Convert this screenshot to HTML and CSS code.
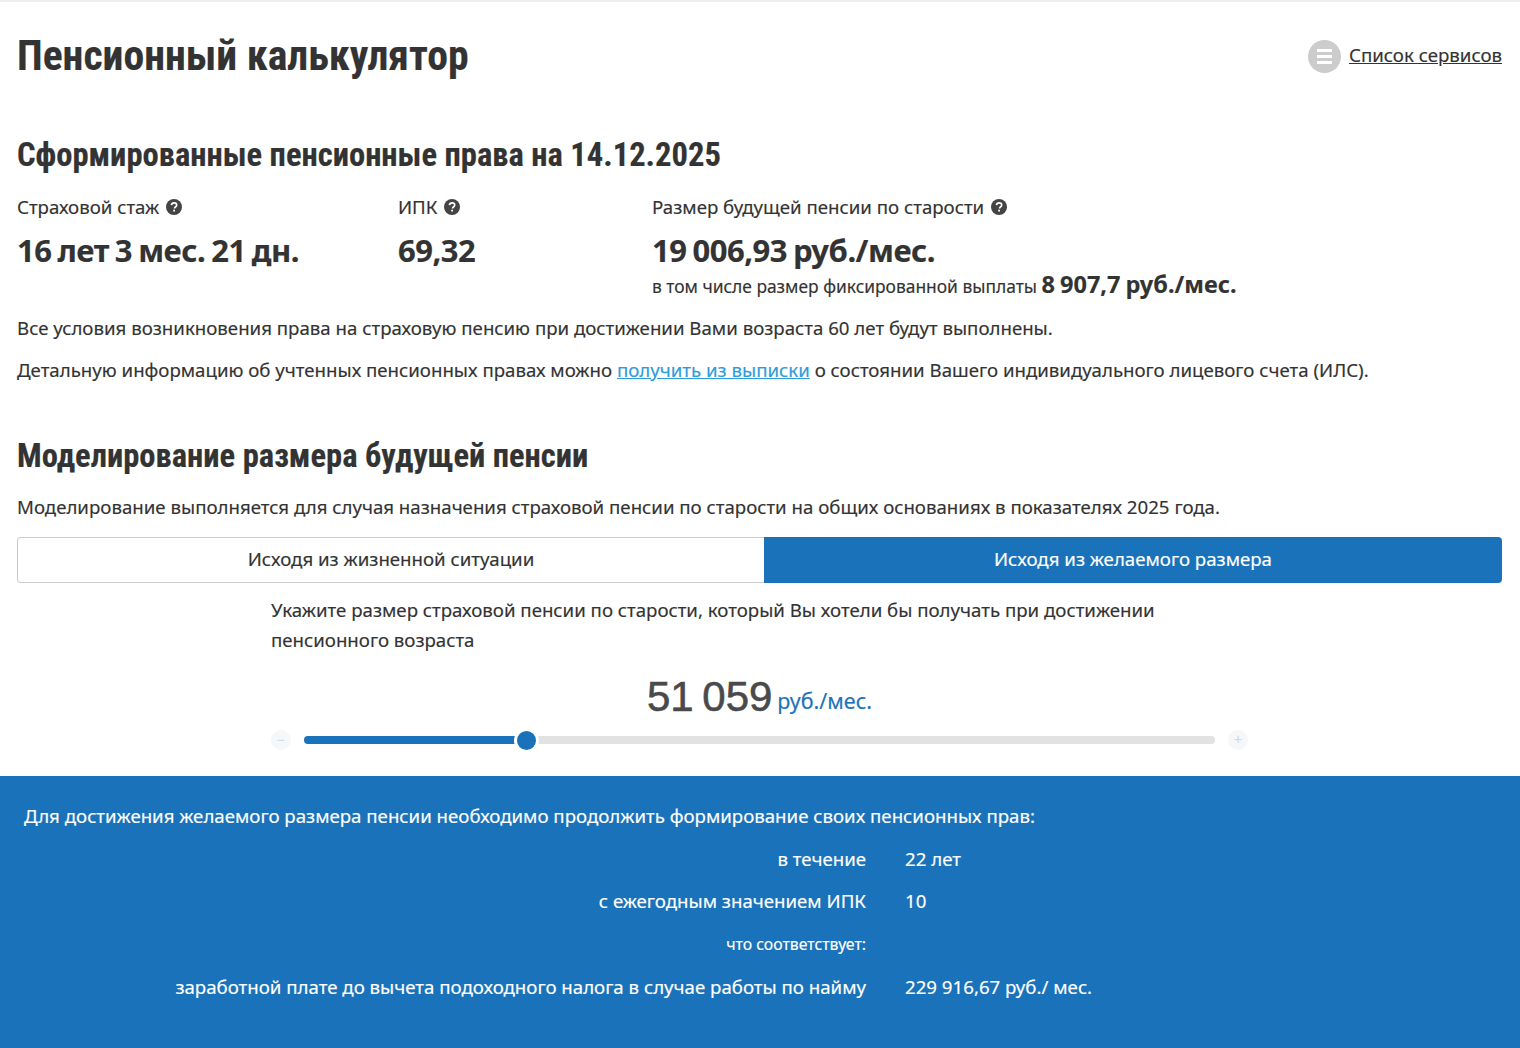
FILE: index.html
```html
<!DOCTYPE html>
<html lang="ru">

<head>
    <meta charset="UTF-8">
    <title>Пенсионный калькулятор</title>
    <link rel="stylesheet" href="styles.css">
</head>

<body>
    <div class="page">
        <header class="page-header">
            <h1>Пенсионный калькулятор</h1>
            <a class="services-link" href="#">
                <span class="services-icon"><i></i><i></i><i></i></span>
                <span class="services-text">Список сервисов</span>
            </a>
        </header>

        <h2 class="rights-title">Сформированные пенсионные права на 14.12.2025</h2>

        <div class="stats">
            <div class="stat">
                <div class="stat-label">Страховой стаж
                    <svg class="help" viewBox="0 0 16 16"><circle cx="8" cy="8" r="8"/><path d="M5.4 6.1c.2-1.500 1.300-2.300 2.700-2.300 1.500 0 2.600.9 2.600 2.200 0 1-.6 1.500-1.300 2-.5.4-.8.6-.8 1.200v.3" fill="none" stroke="#fff" stroke-width="1.700"/><rect x="7.200" y="10.700" width="1.800" height="1.800" fill="#fff"/></svg>
                </div>
                <div class="stat-value">16 лет 3 мес. 21 дн.</div>
            </div>
            <div class="stat">
                <div class="stat-label">ИПК
                    <svg class="help" viewBox="0 0 16 16"><circle cx="8" cy="8" r="8"/><path d="M5.4 6.1c.2-1.500 1.300-2.300 2.700-2.300 1.500 0 2.600.9 2.600 2.200 0 1-.6 1.500-1.300 2-.5.4-.8.6-.8 1.200v.3" fill="none" stroke="#fff" stroke-width="1.700"/><rect x="7.200" y="10.700" width="1.800" height="1.800" fill="#fff"/></svg>
                </div>
                <div class="stat-value">69,32</div>
            </div>
            <div class="stat">
                <div class="stat-label">Размер будущей пенсии по старости
                    <svg class="help" viewBox="0 0 16 16"><circle cx="8" cy="8" r="8"/><path d="M5.4 6.1c.2-1.500 1.300-2.300 2.700-2.300 1.500 0 2.600.9 2.600 2.200 0 1-.6 1.500-1.300 2-.5.4-.8.6-.8 1.200v.3" fill="none" stroke="#fff" stroke-width="1.700"/><rect x="7.200" y="10.700" width="1.800" height="1.800" fill="#fff"/></svg>
                </div>
                <div class="stat-value">19 006,93 руб./мес.</div>
                <div class="stat-note">в том числе размер фиксированной выплаты <b>8 907,7 руб./мес.</b></div>
            </div>
        </div>

        <p class="text text-first">Все условия возникновения права на страховую пенсию при достижении Вами возраста 60 лет будут выполнены.</p>
        <p class="text">Детальную информацию об учтенных пенсионных правах можно <a href="#">получить из выписки</a> о состоянии Вашего индивидуального лицевого счета (ИЛС).</p>

        <h2 class="model-title">Моделирование размера будущей пенсии</h2>
        <p class="text model-text">Моделирование выполняется для случая назначения страховой пенсии по старости на общих основаниях в показателях 2025 года.</p>

        <div class="tabs">
            <div class="tab">Исходя из жизненной ситуации</div>
            <div class="tab active">Исходя из желаемого размера</div>
        </div>

        <div class="model">
            <p class="model-hint">Укажите размер страховой пенсии по старости, который Вы хотели бы получать при достижении пенсионного возраста</p>
            <div class="amount"><span class="amount-num">51 059</span> <span class="amount-unit">руб./мес.</span></div>
            <div class="slider">
                <span class="slider-btn">&minus;</span>
                <div class="slider-track">
                    <div class="slider-fill" style="width: 24.4%"></div>
                    <div class="slider-thumb"></div>
                </div>
                <span class="slider-btn">+</span>
            </div>
        </div>
    </div>

    <section class="result">
        <p class="result-lead">Для достижения желаемого размера пенсии необходимо продолжить формирование своих пенсионных прав:</p>
        <div class="result-row">
            <div class="result-key">в течение</div>
            <div>22 лет</div>
        </div>
        <div class="result-row">
            <div class="result-key">с ежегодным значением ИПК</div>
            <div>10</div>
        </div>
        <div class="result-row result-small">
            <div class="result-key">что соответствует:</div>
            <div></div>
        </div>
        <div class="result-row">
            <div class="result-key">заработной плате до вычета подоходного налога в случае работы по найму</div>
            <div>229 916,67 руб./ мес.</div>
        </div>
    </section>
</body>

</html>
```

FILE: styles.css
```css
* {
    box-sizing: border-box;
}

body {
    margin: 0;
    height: 1048px;
    overflow: hidden;
    background: #fff;
    color: #333;
    font-family: "Noto Sans", "Open Sans", sans-serif;
    font-size: 18.66px;
    line-height: 30px;
    border-top: 2px solid #eee;
    -webkit-text-stroke: 0.15px;
}

.page {
    padding: 0 18px 0 17px;
}

h1, h2 {
    margin: 0;
    font-family: Roboto, "Liberation Sans", sans-serif;
    font-stretch: 75%;
    font-weight: 700;
}

.page-header {
    display: flex;
    justify-content: space-between;
    align-items: center;
    height: 108px;
}

h1 {
    font-size: 41.7px;
    line-height: 50px;
}

.services-link {
    display: flex;
    align-items: center;
    gap: 8px;
    color: #333;
}

.services-text {
    text-decoration: underline;
    padding-bottom: 2px;
}

.services-icon {
    width: 33px;
    height: 33px;
    border-radius: 50%;
    background: #ccc;
    display: flex;
    flex-direction: column;
    justify-content: center;
    align-items: center;
    gap: 3px;
}

.services-icon i {
    width: 15px;
    height: 3px;
    background: #fff;
}

.rights-title {
    margin-top: 23px;
    font-size: 32.55px;
    line-height: 44px;
}

.stats {
    display: grid;
    grid-template-columns: 381px 254px 1fr;
    margin-top: 15px;
}

.stat-label {
    display: flex;
    align-items: center;
    gap: 6.5px;
    line-height: 30px;
}

.help {
    width: 16px;
    height: 16px;
    fill: #444;
}

.stat-value {
    margin-top: 8px;
    font-size: 31px;
    line-height: 40px;
    font-weight: 700;
    letter-spacing: -0.5px;
    word-spacing: -1.5px;
}

.stat-note {
    font-size: 17.4px;
    line-height: 30px;
    margin-top: -1px;
}

.stat-note b {
    font-size: 23.5px;
    word-spacing: -1px;
}

.text {
    margin: 12px 0 0;
}

.text a {
    color: #2d9cdb;
}

.text-first {
    margin-top: 12px;
}

.model-title {
    margin-top: 49px;
    font-size: 32.55px;
    line-height: 44px;
}

.model-text {
    margin-top: 14px;
}

.tabs {
    display: grid;
    grid-template-columns: 747px 1fr;
    margin-top: 15px;
    height: 46px;
}

.tab {
    display: flex;
    align-items: center;
    justify-content: center;
    padding-bottom: 3px;
    border: 1px solid #ccc;
    border-right: 0;
    border-radius: 4px 0 0 4px;
}

.tab.active {
    background: #1a73ba;
    border: 0;
    border-radius: 0 4px 4px 0;
    color: #fff;
}

.model {
    width: 977px;
    margin: 12px auto 0 254px;
}

.model-hint {
    margin: 0;
    width: 920px;
}

.amount {
    margin-top: 17px;
    text-align: center;
    line-height: 50px;
}

.amount-num {
    font-family: "Liberation Sans", sans-serif;
    font-size: 42px;
    color: #4a4a4a;
    -webkit-text-stroke: 0.6px #4a4a4a;
    word-spacing: -3px;
}

.amount-unit {
    font-size: 21.5px;
    color: #1a73ba;
    vertical-align: 2px;
}

.slider {
    display: flex;
    align-items: center;
    gap: 13px;
    margin-top: 1px;
}

.slider-btn {
    width: 20px;
    height: 20px;
    border-radius: 50%;
    background: #f6f7f8;
    color: #c9ddf0;
    font-size: 14px;
    line-height: 20px;
    text-align: center;
}

.slider-track {
    position: relative;
    flex: 1;
    height: 8px;
    border-radius: 4px;
    background: #e2e2e2;
}

.slider-fill {
    height: 8px;
    border-radius: 4px;
    background: #1a73ba;
}

.slider-thumb {
    position: absolute;
    left: 24.4%;
    top: 50%;
    width: 25px;
    height: 25px;
    margin: -12.5px 0 0 -12.5px;
    border-radius: 50%;
    background: #1a73ba;
    border: 3px solid #fff;
}

.result {
    margin-top: 26px;
    height: 280px;
    padding: 25px 24px 0;
    background: #1a73ba;
    color: #fff;
}

.result-lead {
    margin: 0;
}

.result-row {
    display: grid;
    grid-template-columns: 842px 1fr;
    column-gap: 39px;
    margin-top: 12.7px;
}

.result-key {
    text-align: right;
}

.result-small {
    font-size: 15.8px;
}
```
